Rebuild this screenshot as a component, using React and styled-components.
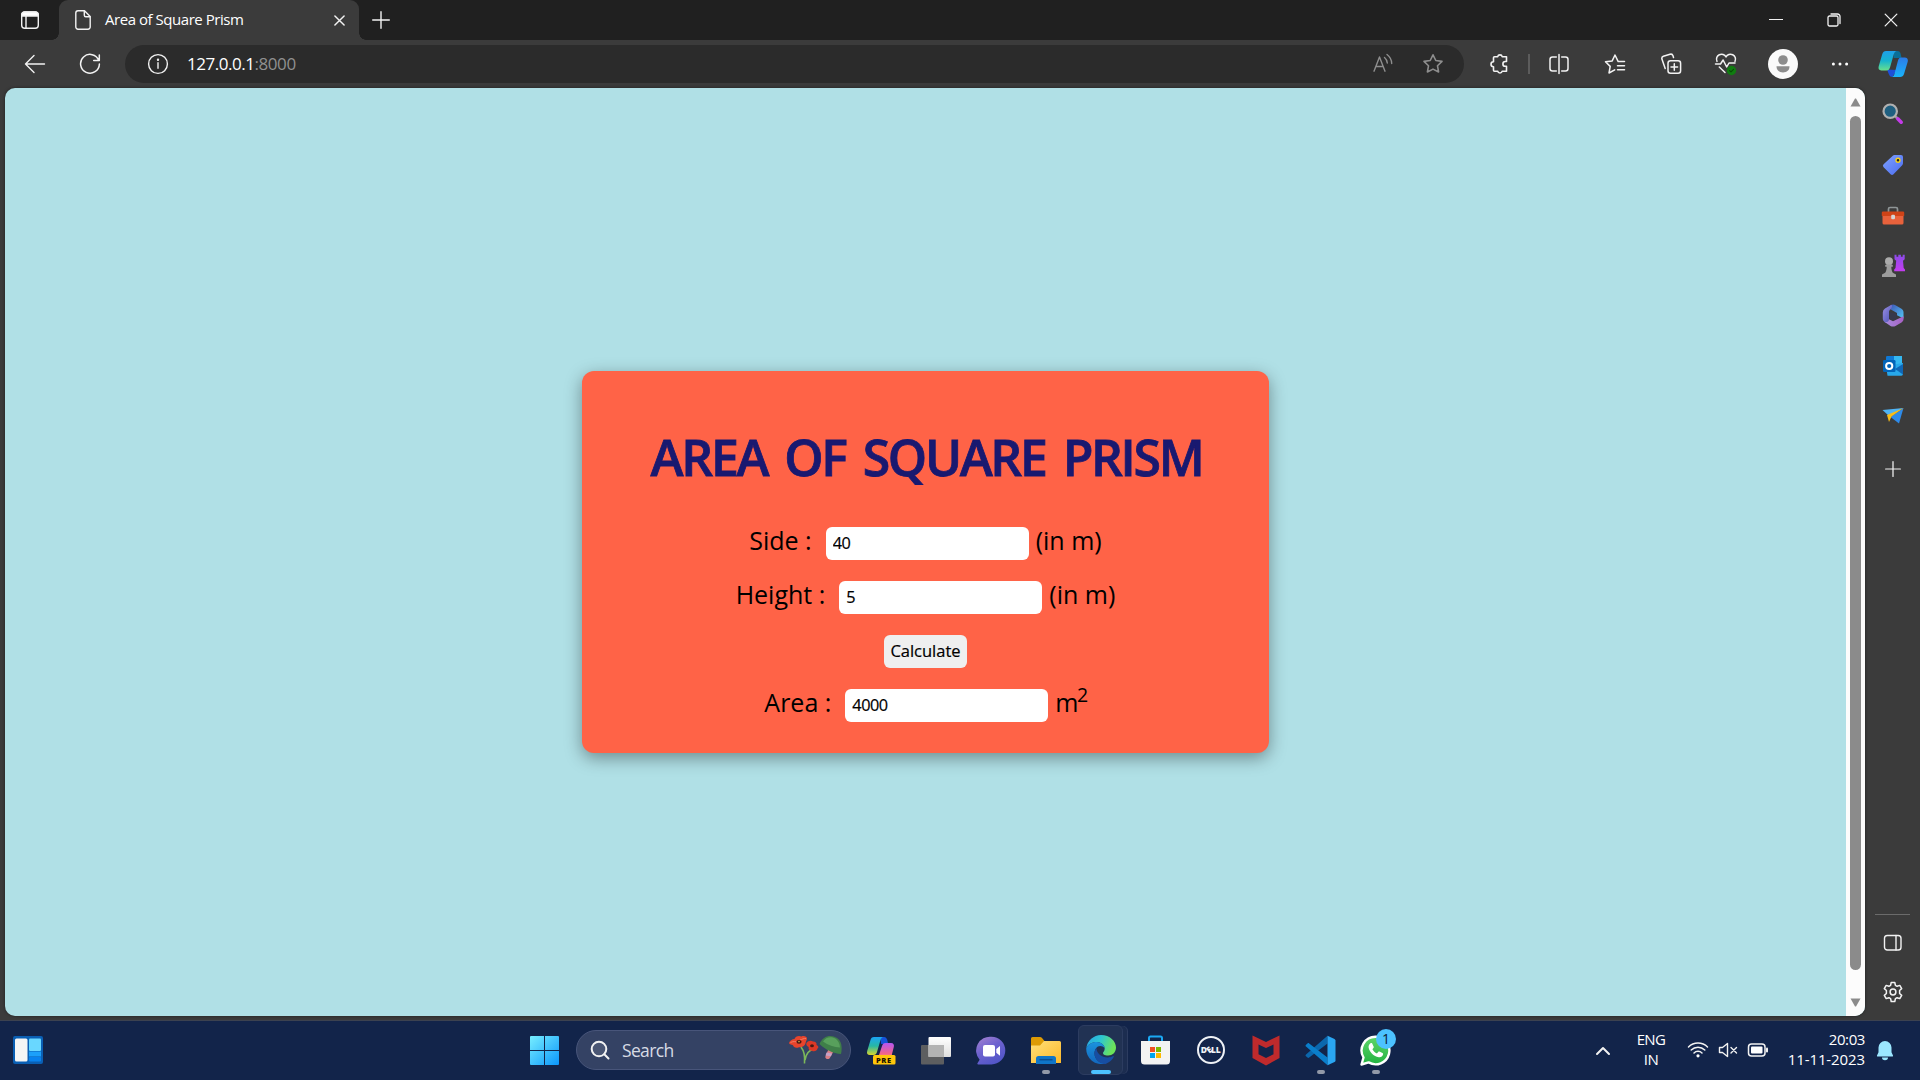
import React from "react";
import styled, { createGlobalStyle, css } from "styled-components";

const ui = `"Open Sans", "Noto Sans", sans-serif`;

const GlobalStyle = createGlobalStyle`
  *, *::before, *::after { box-sizing: border-box; }
  body { margin: 0; overflow: hidden; background: #3b3b3b; }
  svg { display: block; flex: none; }
`;

const Desktop = styled.div`
  display: flex;
  flex-direction: column;
  width: 1920px;
  height: 1080px;
  font-family: ${ui};
  color: #fff;
  background: #3b3b3b;
`;

/* ---------- title bar ---------- */
const TitleBar = styled.header`
  display: flex;
  height: 40px;
  background: #202020;
`;
const Slot = styled.div`
  display: flex;
  flex: none;
  align-items: center;
  justify-content: center;
  width: ${(p) => p.$w}px;
  height: ${(p) => (p.$h ? `${p.$h}px` : "100%")};
`;
const Tab = styled.div`
  position: relative;
  display: flex;
  align-items: center;
  width: 300px;
  padding: 0 12px 0 16px;
  border-radius: 9px 9px 0 0;
  background: #3b3b3b;
  &::before,
  &::after {
    content: "";
    position: absolute;
    bottom: 0;
    width: 7px;
    height: 7px;
  }
  &::before {
    left: -7px;
    background: radial-gradient(circle at 0 0, transparent 6.5px, #3b3b3b 7px);
  }
  &::after {
    right: -7px;
    background: radial-gradient(circle at 100% 0, transparent 6.5px, #3b3b3b 7px);
  }
`;
const TabTitle = styled.span`
  flex: 1;
  margin-left: 14px;
  padding-bottom: 2px;
  font-size: 15px;
  line-height: 36px;
  letter-spacing: -0.46px;
  white-space: nowrap;
`;
const Spacer = styled.div`
  flex: 1;
`;

/* ---------- toolbar ---------- */
const Toolbar = styled.nav`
  display: flex;
  align-items: center;
  height: 48px;
  padding-left: 7px;
`;
const AddressBar = styled.div`
  display: flex;
  align-items: center;
  width: 1339px;
  height: 38px;
  margin: 0 8px 0 8px;
  padding: 0 6px 0 15px;
  border-radius: 19px;
  background: #2b2b2b;
`;
const Url = styled.span`
  flex: 1;
  margin-left: 12px;
  padding-bottom: 2px;
  font-size: 17px;
  letter-spacing: -0.46px;
`;
const Port = styled.span`
  color: #909090;
`;
const ToolbarRule = styled.div`
  width: 2px;
  height: 20px;
  margin-right: 1px;
  background: #5c5c5c;
`;
const Avatar = styled.div`
  display: grid;
  place-items: center;
  width: 30px;
  height: 30px;
  border-radius: 50%;
  background: #fafafa;
`;

/* ---------- page area ---------- */
const Body = styled.div`
  display: flex;
  flex: 1;
  min-height: 0;
`;
const Viewport = styled.main`
  display: flex;
  width: 1860px;
  height: 928px;
  margin-left: 5px;
  overflow: hidden;
  border-radius: 10px;
  background: #b0e0e6;
  box-shadow: 0 0 3px rgba(0, 0, 0, 0.5);
`;
const Page = styled.div`
  display: flex;
  flex: 1;
  align-items: center;
  justify-content: center;
  padding-top: 20px;
`;
const Card = styled.section`
  width: 687px;
  height: 382px;
  padding-top: 52px;
  border-radius: 12px;
  background: #ff6347;
  color: #000;
  box-shadow: 0 5px 17px rgba(0, 0, 0, 0.38);
`;
const Heading = styled.h1`
  margin: 0 0 36px;
  padding-left: 2px;
  color: #191970;
  font-size: 50px;
  font-weight: 600;
  line-height: 68px;
  letter-spacing: -2.35px;
  word-spacing: 6.5px;
  text-align: center;
  white-space: nowrap;
  -webkit-text-stroke: 0.8px #191970;
`;
const Form = styled.div`
  display: flex;
  flex-direction: column;
  gap: 21px;
`;
const Row = styled.div`
  display: flex;
  justify-content: center;
  height: 33px;
  font-size: 25px;
  line-height: 27px;
  white-space: nowrap;
`;
const Label = styled.label`
  margin-right: 14px;
`;
const Unit = styled.span`
  margin-left: 7px;
  letter-spacing: ${(p) => (p.$tight ? -1.5 : 0)}px;
`;
const Sup = styled.sup`
  font-size: 19.5px;
  line-height: 0;
  vertical-align: 10px;
`;
const control = css`
  height: 33px;
  border: 0;
  border-radius: 6px;
  font-family: ${ui};
  color: #000;
  -webkit-text-stroke: 0.2px #000;
`;
const Field = styled.input`
  ${control}
  width: 203px;
  padding: 0 7px 1px;
  background: #fff;
  font-size: 16.3px;
  letter-spacing: -0.5px;
`;
const Button = styled.button`
  ${control}
  width: 83px;
  padding: 0 0 2px;
  background: #efefef;
  font-size: 16.5px;
`;

const Scrollbar = styled.div`
  display: flex;
  flex-direction: column;
  align-items: center;
  width: 19px;
  padding: 10px 0 9px;
  background: #fcfcfc;
`;
const Thumb = styled.div`
  width: 11px;
  height: 854px;
  margin: 9px 0 28px;
  border-radius: 6px;
  background: #8b8b8b;
`;

/* ---------- sidebar ---------- */
const Sidebar = styled.aside`
  display: flex;
  flex-direction: column;
  width: 55px;
  padding: 1px 0 4px;
`;
const SidebarRule = styled.div`
  width: 35px;
  height: 1px;
  margin: 0 0 3px 10px;
  background: #6b6b6b;
`;

/* ---------- taskbar ---------- */
const Taskbar = styled.footer`
  display: flex;
  height: 59px;
  padding-right: 15px;
  background: #12244a;
  box-shadow: 0 -1px 0 #3c4250;
`;
const TaskItem = styled.div`
  position: relative;
  display: flex;
  flex: none;
  align-items: center;
  justify-content: center;
  width: 55px;
  height: 58px;
  &::after {
    content: "";
    position: absolute;
    bottom: 5px;
    left: 50%;
    width: ${(p) => (p.$state === "active" ? 20 : 8)}px;
    height: 4px;
    border-radius: 2px;
    transform: translateX(-50%);
    background: ${(p) => (p.$state === "active" ? "#4cc2ff" : "#9299a8")};
    display: ${(p) => (p.$state ? "block" : "none")};
  }
`;
const ActiveTile = styled.div`
  display: grid;
  place-items: center;
  width: 45px;
  height: 50px;
  border: 1px solid #2c3c60;
  border-radius: 6px;
  background: #213253;
  box-shadow: 5px 0 0 -1px #1c2d50, 6px 0 0 -1px #2c3c60;
`;
const SearchBox = styled.div`
  display: flex;
  align-items: center;
  width: 275px;
  height: 40px;
  margin: 9px 2px 0 4px;
  padding: 0 6px 0 13px;
  border: 1px solid #48557a;
  border-radius: 20px;
  background: #344264;
`;
const SearchText = styled.span`
  flex: 1;
  margin-left: 12px;
  color: #d7dbe4;
  font-size: 17.5px;
  letter-spacing: -0.65px;
`;
const StartSlot = styled(TaskItem)`
  margin-left: 461px;
`;
const Badge = styled.span`
  position: absolute;
  top: 8px;
  right: 7px;
  width: 20px;
  height: 20px;
  border-radius: 50%;
  background: #4cc2ff;
  color: #0b1a33;
  font-size: 14px;
  line-height: 19px;
  text-align: center;
`;
const TrayText = styled.div`
  width: ${(p) => p.$w}px;
  padding-top: 8px;
  font-size: 15px;
  line-height: 20px;
  letter-spacing: ${(p) => p.$spacing}px;
  text-align: ${(p) => p.$align};
`;
const TrayLine = styled.div`
  letter-spacing: ${(p) => p.$spacing}px;
`;

/* ---------- line icons ---------- */
const Line = ({ w = 20, h = w, box, sw = 1.4, color = "#f2f2f2", children }) => (
  <svg width={w} height={h} viewBox={box || `0 0 ${w} ${h}`} fill="none" stroke={color} strokeWidth={sw} strokeLinecap="round" strokeLinejoin="round">
    {children}
  </svg>
);

const WorkspaceIcon = () => (
  <Line w={20}>
    <rect x="1.700" y="2" width="16.600" height="16.300" rx="3" />
    <path d="M1.700 6V5a3 3 0 0 1 3-3h10.600a3 3 0 0 1 3 3v1z" fill="#fff" />
    <path d="M6 6v12" />
  </Line>
);
const PageIcon = () => (
  <Line w={16} h={20}>
    <path d="M3 .8h6.500l5.700 5.700V17a2.200 2.200 0 0 1-2.200 2.200H3A2.200 2.200 0 0 1 .8 17V3A2.200 2.200 0 0 1 3 .8z" />
    <path d="M9.300 1v4.200a1.500 1.500 0 0 0 1.500 1.500H15" />
  </Line>
);
const CrossIcon = ({ size = 12, sw = 1.4 }) => (
  <Line w={size} box="0 0 12 12" sw={sw}>
    <path d="M1 1l10 10M11 1L1 11" />
  </Line>
);
const PlusIcon = ({ size = 18 }) => (
  <Line w={size} box="0 0 18 18">
    <path d="M9 .7v16.600M.7 9h16.600" />
  </Line>
);
const BackIcon = () => (
  <Line w={22} h={20} sw={1.4}>
    <path d="M20.500 10H1.500M10 1.600L1.500 10l8.500 8.400" />
  </Line>
);
const ReloadIcon = () => (
  <Line w={22} sw={1.5}>
    <path d="M19.800 7.500A9.400 9.400 0 1 0 20.400 11M20.300 2v5.600h-5.600" />
  </Line>
);
const InfoIcon = () => (
  <Line w={22} sw={1.4}>
    <circle cx="11" cy="11" r="9.400" />
    <path d="M11 9.800v5.500" />
    <circle cx="11" cy="6.800" r=".5" fill="#f2f2f2" />
  </Line>
);
const ReadAloudIcon = () => (
  <Line w={22} color="#8e8e8e" sw={1.4}>
    <path d="M2 18.200L7.500 4l5.500 14.200M4 13.500h7M12.500 4.500a8 8 0 0 1 2.800 5.500M15 1.500a11.500 11.500 0 0 1 4.700 9" />
  </Line>
);
const starPath = "M11 1.800l2.800 5.700 6.200.9-4.500 4.400 1.100 6.200-5.600-2.900-5.600 2.900 1.100-6.200L2 8.400l6.200-.9z";
const StarIcon = () => (
  <Line w={22} color="#8e8e8e" sw={1.6}>
    <path d={starPath} />
  </Line>
);
const PuzzleIcon = () => (
  <Line w={22} sw={1.6}>
    <path d="M5.500 3.700h3.200a2.300 2.300 0 0 1 4.500 0h4.300v4.800h-1.200a2.400 2.400 0 0 0 0 4.800h1.200v4.900h-4.300a2.300 2.300 0 0 1-4.500 0H5.500a1 1 0 0 1-1-1v-3.500a2.500 2.500 0 0 1 0-5V4.700a1 1 0 0 1 1-1z" />
  </Line>
);
const SplitIcon = () => (
  <Line w={22} sw={1.5}>
    <path d="M11 1.500v19M8.300 4H4.500a2.500 2.500 0 0 0-2.500 2.500v9A2.500 2.500 0 0 0 4.500 18h3.800M13.700 4h3.800A2.500 2.500 0 0 1 20 6.500v9a2.500 2.500 0 0 1-2.500 2.500h-3.800" />
  </Line>
);
const FavoritesIcon = () => (
  <Line w={22} sw={1.5}>
    <path d="M20.500 8.600h-6.300L11 2 8.200 7.900l-6.700.8 4.700 4.700L5 20l5.700-3.200M13.500 12.700h7M13.500 16.800h7" />
  </Line>
);
const CollectionsIcon = () => (
  <Line w={22} sw={1.5}>
    <rect x="8" y="7.700" width="12.600" height="12.600" rx="2.500" />
    <path d="M14.300 10.700v6.600M11 14h6.600M5.200 15.500L2 6.300a2.400 2.400 0 0 1 1.400-3L10 1.300a2.400 2.400 0 0 1 3 1.500l.5 1.700" />
  </Line>
);
const HealthIcon = () => (
  <Line w={24} h={24} sw={1.5}>
    <path d="M3 9.400A5 5 0 0 1 12 5a5 5 0 0 1 9 4.400M1.500 12h5l2.600-4 3.600 7 2.300-4h6M5.300 15l5.700 5.500" />
    <circle cx="17.500" cy="18.500" r="4.700" fill="#107c10" stroke="none" />
    <path d="M15.600 18.600l1.400 1.300 2.500-2.600" stroke="#064d06" strokeWidth="1.100" />
  </Line>
);
const PersonIcon = () => (
  <svg width="20" height="22" viewBox="0 0 20 22" fill="#8c8c8c">
    <circle cx="10" cy="7" r="4.800" />
    <path d="M3.500 13.300h13c0 4-2.600 6.200-6.500 6.200s-6.500-2.200-6.500-6.200z" />
  </svg>
);
const DotsIcon = () => (
  <svg width="18" height="4" viewBox="0 0 18 4" fill="#fff">
    <circle cx="2.400" cy="2" r="1.500" />
    <circle cx="9" cy="2" r="1.500" />
    <circle cx="15.600" cy="2" r="1.500" />
  </svg>
);
const CopilotIcon = () => (
  <svg width="30" height="28" viewBox="0 0 30 28">
    <defs>
      <linearGradient id="cpA" x1="0" y1="0" x2="0" y2="1"><stop stopColor="#1f9fea" /><stop offset=".5" stopColor="#16b3cf" /><stop offset="1" stopColor="#68e08c" /></linearGradient>
      <linearGradient id="cpB" x1="0" y1="0" x2="0" y2="1"><stop stopColor="#2c7be8" /><stop offset="1" stopColor="#19b4fb" /></linearGradient>
    </defs>
    <path d="M16 1h3.500c2 0 2.700 1.300 3.200 3l.8 4h-8z" fill="#0a6f98" />
    <path d="M9 19.500l2 5c.7 1.700 1.700 2.500 3.500 2.500l4-7z" fill="#1d4fd8" />
    <path d="M8 1h10.500c-1.600.5-2.200 1.600-2.800 3.500L12 17.500c-.7 2-1.500 3-3.500 3H3.300C1 20.500 0 18.600.7 16.300L4.300 4C5 2 6 1 8 1z" fill="url(#cpA)" />
    <path d="M22 27H14c1.500-.5 2-1.600 2.500-3.300L20 10.500c.6-2 1.500-3 3.500-3h3.200c2.500 0 3.600 1.800 3 4.200L26 24c-.6 2-1.900 3-4 3z" fill="url(#cpB)" />
  </svg>
);

/* ---------- sidebar icons ---------- */
const MagnifierIcon = () => (
  <svg width="22" height="22" viewBox="0 0 22 22">
    <path d="M12.500 12.500l3 3" stroke="#9a9a9a" strokeWidth="2.500" />
    <path d="M15.800 15.800l3.400 3.400" stroke="#c43be8" strokeWidth="3.600" strokeLinecap="round" />
    <circle cx="8.200" cy="8.200" r="6.700" fill="#1f5f80" stroke="#b0b0b0" strokeWidth="2.200" />
  </svg>
);
const TagIcon = () => (
  <svg width="22" height="22" viewBox="0 0 22 22">
    <defs><linearGradient id="tag" x1="0" y1="0" x2="1" y2="1"><stop stopColor="#7fa2ff" /><stop offset="1" stopColor="#4b6cf0" /></linearGradient></defs>
    <path d="M12.500 1H19a2 2 0 0 1 2 2v6.200c0 .8-.3 1.400-.8 2l-8.700 9a2 2 0 0 1-2.900 0l-7-7a2 2 0 0 1 0-2.900L10.800 1.800C11.300 1.300 11.800 1 12.500 1z" fill="url(#tag)" />
    <circle cx="16" cy="6.200" r="2" fill="#222" stroke="#f5cf1d" strokeWidth="1.400" />
  </svg>
);
const ToolboxIcon = () => (
  <svg width="24" height="20" viewBox="0 0 24 20">
    <path d="M7.500 6V3a1.500 1.500 0 0 1 1.500-1.500h6A1.500 1.500 0 0 1 16.500 3v3" fill="none" stroke="#8f9596" strokeWidth="1.700" />
    <rect x="1.500" y="9" width="21" height="9.500" rx="1.500" fill="#e8623c" />
    <path d="M2 5.500h20a1.200 1.200 0 0 1 1.200 1.200V10H.8V6.700A1.200 1.200 0 0 1 2 5.500z" fill="#cf4317" />
    <rect x="10.200" y="8.800" width="3.800" height="4.400" rx="1.300" fill="#d5d5d5" />
  </svg>
);
const ChessIcon = () => (
  <svg width="24" height="24" viewBox="0 0 24 24">
    <defs><linearGradient id="rook" x1="0" y1="0" x2="0" y2="1"><stop stopColor="#8a4be8" /><stop offset="1" stopColor="#c53df0" /></linearGradient></defs>
    <path d="M13.500.800h2v2h1.800v-2h2.600v2h1.800v-2h2v4.500l-1.700 1.400.7 7.300 1.300 1.500v1.800H13.200v-1.800l1.300-1.500.7-7.300-1.700-1.400z" fill="url(#rook)" />
    <circle cx="8" cy="7.300" r="4" fill="#ababab" />
    <path d="M5.600 10.500h4.800l1.400.6v1.700h-1.500c0 2.400.5 4.400 1.500 6l3.200 1.700V23H1v-2.500l3.200-1.700c1-1.600 1.500-3.600 1.500-6H4.200v-1.700z" fill="#9c9c9c" />
  </svg>
);
const M365Icon = () => (
  <svg width="22" height="23" viewBox="0 0 22 23">
    <defs>
      <linearGradient id="mA" x1="0" y1="0" x2="1" y2="1"><stop stopColor="#3d54b5" /><stop offset="1" stopColor="#53c8f5" /></linearGradient>
      <linearGradient id="mB" x1="0" y1="0" x2="1" y2="1"><stop stopColor="#9c90e2" /><stop offset="1" stopColor="#4a51b6" /></linearGradient>
      <linearGradient id="mC" x1="0" y1="0" x2="1" y2="0"><stop stopColor="#a68de0" /><stop offset="1" stopColor="#a861c4" /></linearGradient>
    </defs>
    <path d="M8.500 1.200c1.700-.9 3.500-.9 5 0l6 3.500c1.200.7 2 2 2 3.500v6.300L15 11.300V9L8 5z" fill="url(#mA)" />
    <path d="M9.500.8L3 4.500A4.500 4.500 0 0 0 .8 8.400v6.200c0 1.600.9 3 2.200 3.800 2 .5 4-.6 4-2.700V8.300c0-3 3.200-3.200 3-6.300z" fill="url(#mB)" />
    <path d="M2 17.500c2.600 1.500 5-.2 5-2.300l4 2 10.500-5v3c0 1.300-.8 2.500-2 3.200l-6 3.500c-1.500.9-3.500.9-5 0z" fill="url(#mC)" />
    <path d="M7.200 8l7.500 1.500v4.800L11 16.800l-3.800-2.300z" fill="#37394a" />
  </svg>
);
const OutlookIcon = () => (
  <svg width="22" height="22" viewBox="0 0 22 22">
    <rect x="4" y="1" width="16" height="15" rx="1.200" fill="#0f78d4" />
    <rect x="12" y="1" width="8" height="9" fill="#35b8f1" />
    <path d="M4 11l17-3v11a1.700 1.700 0 0 1-1.700 1.700H5.500z" fill="#28a8ea" />
    <path d="M13 14l8-5v10.500z" fill="#1066b5" />
    <rect x="1" y="5" width="12.500" height="12" rx="1.200" fill="#0364b8" />
    <circle cx="7.200" cy="11" r="3.100" fill="none" stroke="#fff" strokeWidth="2" />
  </svg>
);
const PlaneIcon = () => (
  <svg width="22" height="18" viewBox="0 0 22 18">
    <path d="M.5 3L21.500 1 7 9z" fill="#4fb4f5" />
    <path d="M21.500 1L17 16.500 8.500 10z" fill="#2e8bea" />
    <path d="M21.500 1L5 8l2 7 2.500-5.500z" fill="#f8bd18" />
  </svg>
);
const PanelIcon = () => (
  <Line w={20}>
    <rect x="1.500" y="2.500" width="16.500" height="14.500" rx="2.800" />
    <path d="M13 2.500V17" />
  </Line>
);
const GearIcon = () => (
  <Line w={22} sw={1.5}>
    <circle cx="11" cy="11" r="2.900" />
    <path d="M9.200 1.500h3.600l.6 2.800 1.700 1 2.700-.9 1.900 3.200-2.100 1.900v3l2.100 1.900-1.900 3.200-2.700-.9-1.700 1-.6 2.800H9.200l-.6-2.800-1.700-1-2.700.9-1.900-3.200 2.100-1.900v-3L2.300 7.600l1.900-3.200 2.700.9 1.700-1z" />
  </Line>
);

/* ---------- taskbar icons ---------- */
const WidgetsIcon = () => (
  <svg width="30" height="28" viewBox="0 0 30 28">
    <rect width="30" height="28" rx="2" fill="#0a5fb4" />
    <rect x="2" y="2.500" width="12.500" height="23" rx="1.500" fill="#f5f5f5" />
    <rect x="16" y="2.500" width="12" height="12.500" rx="1" fill="#69d7ff" />
    <rect x="16" y="15.500" width="12" height="5" fill="#1ba0fa" />
    <rect x="16" y="21" width="12" height="4.500" rx="1" fill="#0882ee" />
  </svg>
);
const StartIcon = () => (
  <svg width="29" height="29" viewBox="0 0 29 29">
    <defs><linearGradient id="win" x1="0" y1="0" x2="1" y2="1"><stop stopColor="#77eeff" /><stop offset="1" stopColor="#0b96fb" /></linearGradient></defs>
    <path d="M1 0h13v14H0V1a1 1 0 0 1 1-1zM15 0h13a1 1 0 0 1 1 1v13H15zM0 15h14v14H1a1 1 0 0 1-1-1zM15 15h14v13a1 1 0 0 1-1 1H15z" fill="url(#win)" />
  </svg>
);
const SearchIcon = () => (
  <Line w={20} sw={2}>
    <circle cx="9" cy="9" r="7.300" fill="#4a5674" />
    <path d="M14.300 14.300L18.500 18.500" />
  </Line>
);
const PoppyIcon = () => (
  <svg width="56" height="32" viewBox="0 0 56 32">
    <path d="M13 13c4 5 4 11 3.500 16.500M26 15c-5 1-8 5-9 11" stroke="#7cb85a" strokeWidth="1.600" fill="none" />
    <path d="M1 9c1-2.500 3-3.800 5.500-4 .8-2.500 4-4 7-2.500 2.500-1 5.500 0 5.500 2.200-.3 1.800-1.300 3-1.500 4.500-.7 3-4 4.500-6.500 4-3 1.200-5.500.3-6-2C3.500 10.500 1.500 10.500 1 9z" fill="#e8442c" />
    <path d="M18.500 9c1.500-2.500 4.500-3 6.500-1.500 2.500 0 4 1.500 3.500 3.500 2 1 2.500 2.500 1 3.500-.5 2.500-3.500 3.500-5.500 2.200-2.500.3-4-1.700-3.300-3.700C18.800 12 17.800 10.500 18.500 9z" fill="#dd3826" />
    <path d="M2.500 8.500c3-1.500 5.500-1 7.500 0M12 6c2-.5 4-2 6-1.500" stroke="#f4806a" strokeWidth=".9" fill="none" />
    <ellipse cx="11" cy="7.800" rx="2.600" ry="1.900" fill="#4a1710" />
    <circle cx="11" cy="7.600" r=".8" fill="#d9b14a" />
    <ellipse cx="24" cy="11.800" rx="1.900" ry="1.500" fill="#4a1710" />
    <path d="M40.500 15l5.500 1.500-4.500 8c-2 1.300-4 .3-4.300-1.500z" fill="#d97f88" />
    <path d="M38.500 18.500l5.500 1-1 2.700-5.500-.7z" fill="#c5a1c8" />
    <path d="M31.500 10C35 1.500 43 .200 49 4c4.500 3 5.500 9 4 16-8-.5-15-4-21.500-10z" fill="#3f7f49" />
    <path d="M35 7.500C38 2.500 44 2 48 5c2.500 2 3.800 5 4 8.500C46 13.500 40 11 35 7.500z" fill="#58a05c" />
  </svg>
);
const PreText = styled.text`
  font-family: ${ui};
  font-size: 7.5px;
  font-weight: 800;
  letter-spacing: 0.6px;
`;
const CopilotPreIcon = () => (
  <svg width="30" height="29" viewBox="0 0 30 29">
    <defs>
      <linearGradient id="cqA" x1="0" y1="0" x2="0" y2="1"><stop stopColor="#1ba5f5" /><stop offset=".5" stopColor="#27b7a4" /><stop offset="1" stopColor="#d8d62c" /></linearGradient>
      <linearGradient id="cqB" x1="0" y1="0" x2="0" y2="1"><stop stopColor="#b455f2" /><stop offset=".7" stopColor="#f2648a" /><stop offset="1" stopColor="#ff9a63" /></linearGradient>
    </defs>
    <path d="M14 1h4c2 0 2.800 1.500 3.300 3l.9 4h-7z" fill="#1552d8" />
    <path d="M8 1h9c-1.500.6-2 1.500-2.500 3L11 16c-.6 2-1.500 3-3.500 3H4C1.500 19 .5 17.500 1.200 15L4.500 4C5 2 6 1 8 1z" fill="url(#cqA)" />
    <path d="M23 22H12l4-12c.7-2 1.500-3 3.500-3H25c2.500 0 3.400 1.700 2.800 4L25.500 20z" fill="url(#cqB)" />
    <rect x="7" y="19" width="22.500" height="9.500" rx="1.500" fill="#ffc60a" />
    <PreText x="10" y="26.500" fill="#1d1600">PRE</PreText>
  </svg>
);
const TaskViewIcon = () => (
  <svg width="30" height="29" viewBox="0 0 30 29">
    <defs><linearGradient id="tv" x1="0" y1="0" x2="0" y2="1"><stop stopColor="#ffffff" /><stop offset="1" stopColor="#dedede" /></linearGradient></defs>
    <rect x="0" y="9" width="23" height="19.500" rx="1" fill="#5d5e60" />
    <rect x="7.500" y="1" width="22.500" height="20" rx="1" fill="url(#tv)" />
    <rect x="7.500" y="9" width="15.500" height="12" fill="#b3b3b3" />
  </svg>
);
const ChatIcon = () => (
  <svg width="30" height="29" viewBox="0 0 30 29">
    <defs><linearGradient id="chat" x1="0" y1="0" x2=".6" y2="1"><stop stopColor="#a883d0" /><stop offset=".5" stopColor="#6d62cf" /><stop offset="1" stopColor="#5256c8" /></linearGradient></defs>
    <path d="M15.500.8a13.800 13.800 0 0 1 0 27.600H2.200c-.8 0-1.100-.8-.6-1.400l2-3.300A13.800 13.800 0 0 1 15.500.8z" fill="url(#chat)" />
    <rect x="7" y="9" width="12" height="11.500" rx="2" fill="#fff" />
    <path d="M20.300 13l3.700-3v9.700l-3.700-3z" fill="#fff" />
  </svg>
);
const FolderIcon = () => (
  <svg width="30" height="28" viewBox="0 0 30 28">
    <defs><linearGradient id="fold" x1="0" y1="0" x2="1" y2="1"><stop stopColor="#ffe07a" /><stop offset="1" stopColor="#fcb92a" /></linearGradient></defs>
    <path d="M0 2.500A1.500 1.500 0 0 1 1.500 1H9c.8 0 1.300.2 1.800.7L13.500 5v6H0z" fill="#dd9b05" />
    <path d="M0 9.500h9l4-4.500h15.500A1.500 1.500 0 0 1 30 6.500V27H0z" fill="url(#fold)" />
    <path d="M5 28v-5.500a2.500 2.500 0 0 1 2.500-2.500h15a2.500 2.500 0 0 1 2.500 2.500V28z" fill="#0f75c8" />
    <path d="M8.500 23.700h13" stroke="#0b4f93" strokeWidth="1.500" />
  </svg>
);
const EdgeIcon = () => (
  <svg width="30" height="30" viewBox="0 0 30 30">
    <defs>
      <linearGradient id="eA" x1="0" y1="0" x2="1" y2=".3"><stop stopColor="#28a3e5" /><stop offset=".5" stopColor="#2dc6d2" /><stop offset="1" stopColor="#6ce35a" /></linearGradient>
      <linearGradient id="eB" x1="0" y1="0" x2="0" y2="1"><stop stopColor="#1b93dd" /><stop offset="1" stopColor="#1266bd" /></linearGradient>
    </defs>
    <path d="M.3 13A15 15 0 0 1 15 0c9 0 15 6.300 15 12.500 0 5-3.700 8-7.800 8-4.200 0-5.200-1.700-5.200-2.600 0-.8 1.700-1.600 1.700-4.400 0-3.400-3.700-6.500-8-6.500C5.800 7 2 9.500.3 13z" fill="url(#eA)" />
    <path d="M.3 13C2 9.500 5.800 7 10.700 7c4.300 0 8 3.100 8 6.500-1-1.800-2.800-2.500-4.500-2.500-3.300 0-5.700 3.500-5.700 7.500 0 6 5.300 10 11 10A15 15 0 0 1 .3 13z" fill="url(#eB)" />
    <path d="M10.500 13c-1.300 1.400-2 3.300-2 5.500 0 6 5.300 10.500 11.200 10.500 3.700-1.600 6.800-4.200 8-7 .3-.8-.3-1.200-1-.8-1.500.8-3 1.200-4.900 1.200-6.500 0-11.300-4-11.300-9.400z" fill="#174ea2" />
  </svg>
);
const StoreIcon = () => (
  <svg width="29" height="30" viewBox="0 0 29 30">
    <path d="M8 7V3a1.500 1.500 0 0 1 1.500-1.500h10A1.500 1.500 0 0 1 21 3v4" fill="none" stroke="#1aa8f3" strokeWidth="2" />
    <path d="M0 6h29v20a3.500 3.500 0 0 1-3.500 3.500h-22A3.500 3.500 0 0 1 0 26z" fill="#f3f3f3" />
    <rect x="9" y="12" width="5" height="5" fill="#f25022" />
    <rect x="15" y="12" width="5" height="5" fill="#7fba00" />
    <rect x="9" y="18" width="5" height="5" fill="#00a4ef" />
    <rect x="15" y="18" width="5" height="5" fill="#ffb900" />
  </svg>
);
const DellBadge = styled.div`
  display: flex;
  align-items: center;
  justify-content: center;
  width: 28px;
  height: 28px;
  border: 2px solid #eef1f5;
  border-radius: 50%;
  color: #eef1f5;
  font-size: 8.5px;
  font-weight: 800;
  line-height: 12px;
  letter-spacing: -0.3px;
`;
const DellE = styled.span`
  transform: rotate(-38deg);
`;
const DellIcon = () => (
  <DellBadge>
    <span>D</span>
    <DellE>E</DellE>
    <span>LL</span>
  </DellBadge>
);
const McAfeeIcon = () => (
  <svg width="28" height="31" viewBox="0 0 28 31">
    <path d="M.5.500L14 7 27.500.500V23L14 30.500.500 23z" fill="#bf2a2c" />
    <path d="M6.500 9.500L14 13l7.500-3.500v9.700L14 23l-7.500-3.800z" fill="#12244a" />
  </svg>
);
const VsCodeIcon = () => (
  <svg width="31" height="31" viewBox="0 0 31 31">
    <path d="M22.500.800v7.800L4.200 22.600c-.5.400-1.200.4-1.700 0L1 21.300c-.6-.5-.6-1.400 0-1.900z" fill="#0b67ad" />
    <path d="M22.500 30.200v-7.800L4.200 8.400c-.5-.4-1.200-.4-1.700 0L1 9.700c-.6.500-.6 1.400 0 1.900z" fill="#0a7ecb" />
    <path d="M22.500.800l7 3.200c.6.300 1 .9 1 1.600v19.800c0 .7-.4 1.300-1 1.600l-7 3.200z" fill="#2aa6f2" />
  </svg>
);
const WhatsAppIcon = () => (
  <svg width="31" height="31" viewBox="0 0 31 31">
    <defs><linearGradient id="wa" x1="0" y1="0" x2="0" y2="1"><stop stopColor="#5fd56a" /><stop offset="1" stopColor="#22b340" /></linearGradient></defs>
    <path d="M15.500 1.700A13.800 13.800 0 1 1 8.600 27.400L1.500 29.500l2-7A13.800 13.800 0 0 1 15.500 1.700z" fill="url(#wa)" stroke="#fff" strokeWidth="2.400" strokeLinejoin="round" />
    <path d="M10.500 8.200c.5-.4 1.300-.4 1.700.2l1.500 3.300c.2.500 0 1-.3 1.300l-1 1.200c1 2 2.500 3.300 4.500 4.200l1.300-1.500c.3-.4.800-.5 1.300-.3l3 1.500c.6.300.7.700.6 1.200-.4 2.300-2.400 3.300-4.300 3C13.500 21.300 9.500 17.300 8.600 12.600c-.2-1.800.7-3.500 1.900-4.400z" fill="#fff" />
  </svg>
);
const ChevronIcon = () => (
  <Line w={16} h={10} sw={2}>
    <path d="M2 8l6-6 6 6" />
  </Line>
);
const WifiIcon = () => (
  <Line w={22} h={18} sw={1.5}>
    <path d="M1.500 6a13.500 13.500 0 0 1 19 0M4.200 9a9.600 9.600 0 0 1 13.600 0M7 12a5.600 5.600 0 0 1 8 0" />
    <circle cx="11" cy="14.800" r="1.600" fill="#fff" stroke="none" />
  </Line>
);
const MuteIcon = () => (
  <Line w={20} h={16} sw={1.4}>
    <path d="M1.500 5.500h3L9.500 1.500v13l-5-4h-3zM13 5.500l5.500 5.500M18.500 5.500L13 11" />
  </Line>
);
const BatteryIcon = () => (
  <Line w={22} h={16} sw={1.5}>
    <rect x="1.500" y="2" width="16.500" height="12" rx="3" />
    <rect x="4" y="4.500" width="11.500" height="7" rx="1" fill="#fff" stroke="none" />
    <path d="M20 6.500v3" strokeWidth="2" />
  </Line>
);
const BellIcon = () => (
  <svg width="18" height="21" viewBox="0 0 18 21" fill="#9be7ff">
    <path d="M9 1a6.500 6.500 0 0 1 6.500 6.500v4.800l1.500 3.200c.2.500-.1 1-.6 1H1.600c-.5 0-.8-.5-.6-1l1.500-3.200V7.500A6.500 6.500 0 0 1 9 1zM6 17.500h6a3 2.800 0 0 1-6 0z" />
  </svg>
);
const Arrow = ({ down }) => (
  <svg width="11" height="9" viewBox="0 0 11 9">
    <path d={down ? "M.5.500h10L6 8.500H5z" : "M.5 8.500h10L6 .500H5z"} fill="#8b8b8b" />
  </svg>
);
const MinimizeIcon = () => (
  <Line w={14} sw={1.2}>
    <path d="M.5 6.500h13" />
  </Line>
);
const RestoreIcon = () => (
  <Line w={14} sw={1.3}>
    <rect x="1" y="3" width="10" height="10" rx="1.500" />
    <path d="M4 1h6.500A2.500 2.500 0 0 1 13 3.500V10.500" />
  </Line>
);

const sidebarIcons = [
  { Icon: MagnifierIcon, h: 50 },
  { Icon: TagIcon, h: 52 },
  { Icon: ToolboxIcon, h: 50 },
  { Icon: ChessIcon, h: 49 },
  { Icon: M365Icon, h: 51 },
  { Icon: OutlookIcon, h: 50 },
  { Icon: PlaneIcon, h: 49 },
];
const taskIcons = [
  { Icon: CopilotPreIcon },
  { Icon: TaskViewIcon },
  { Icon: ChatIcon },
  { Icon: FolderIcon, state: "open" },
  { Icon: EdgeIcon, state: "active" },
  { Icon: StoreIcon },
  { Icon: DellIcon },
  { Icon: McAfeeIcon },
  { Icon: VsCodeIcon, state: "open" },
  { Icon: WhatsAppIcon, state: "open", badge: "1" },
];

export default function App() {
  return (
    <Desktop>
      <GlobalStyle />
      <TitleBar>
        <Slot $w={59}><WorkspaceIcon /></Slot>
        <Tab>
          <PageIcon />
          <TabTitle>Area of Square Prism</TabTitle>
          <Slot $w={16}><CrossIcon size={11} sw={1.6} /></Slot>
        </Tab>
        <Slot $w={43}><PlusIcon /></Slot>
        <Spacer />
        <Slot $w={57.5}><MinimizeIcon /></Slot>
        <Slot $w={57.5}><RestoreIcon /></Slot>
        <Slot $w={57.5}><CrossIcon size={14} sw={1.1} /></Slot>
      </TitleBar>

      <Toolbar>
        <Slot $w={55}><BackIcon /></Slot>
        <Slot $w={55}><ReloadIcon /></Slot>
        <AddressBar>
          <Slot $w={35}><InfoIcon /></Slot>
          <Url>127.0.0.1<Port>:8000</Port></Url>
          <Slot $w={50}><ReadAloudIcon /></Slot>
          <Slot $w={50}><StarIcon /></Slot>
        </AddressBar>
        <Slot $w={56}><PuzzleIcon /></Slot>
        <ToolbarRule />
        <Slot $w={56}><SplitIcon /></Slot>
        <Slot $w={56}><FavoritesIcon /></Slot>
        <Slot $w={55}><CollectionsIcon /></Slot>
        <Slot $w={56}><HealthIcon /></Slot>
        <Slot $w={58}><Avatar><PersonIcon /></Avatar></Slot>
        <Slot $w={56}><DotsIcon /></Slot>
        <Slot $w={49}><CopilotIcon /></Slot>
      </Toolbar>

      <Body>
        <Viewport>
          <Page>
            <Card>
              <Heading>AREA OF SQUARE PRISM</Heading>
              <Form>
                <Row>
                  <Label>Side :</Label>
                  <Field defaultValue="40" />
                  <Unit>(in m)</Unit>
                </Row>
                <Row>
                  <Label>Height :</Label>
                  <Field defaultValue="5" />
                  <Unit>(in m)</Unit>
                </Row>
                <Row><Button>Calculate</Button></Row>
                <Row>
                  <Label>Area :</Label>
                  <Field defaultValue="4000" />
                  <Unit $tight>m<Sup>2</Sup></Unit>
                </Row>
              </Form>
            </Card>
          </Page>
          <Scrollbar>
            <Arrow />
            <Thumb />
            <Arrow down />
          </Scrollbar>
        </Viewport>
        <Sidebar>
          {sidebarIcons.map(({ Icon, h }, i) => (
            <Slot key={i} $w={55} $h={h}><Icon /></Slot>
          ))}
          <Slot $w={55} $h={58}><PlusIcon size={16} /></Slot>
          <Spacer />
          <SidebarRule />
          <Slot $w={55} $h={49}><PanelIcon /></Slot>
          <Slot $w={55} $h={50}><GearIcon /></Slot>
        </Sidebar>
      </Body>

      <Taskbar>
        <Slot $w={56} $h={58}><WidgetsIcon /></Slot>
        <StartSlot><StartIcon /></StartSlot>
        <SearchBox>
          <SearchIcon />
          <SearchText>Search</SearchText>
          <PoppyIcon />
        </SearchBox>
        {taskIcons.map(({ Icon, state, badge }, i) => (
          <TaskItem key={i} $state={state}>
            {state === "active" ? <ActiveTile><Icon /></ActiveTile> : <Icon />}
            {badge && <Badge>{badge}</Badge>}
          </TaskItem>
        ))}
        <Spacer />
        <Slot $w={40}><ChevronIcon /></Slot>
        <TrayText $w={56} $align="center" $spacing={-0.6}>
          <div>ENG</div>
          <div>IN</div>
        </TrayText>
        <Slot $w={38} $h={58}><WifiIcon /></Slot>
        <Slot $w={22} $h={58}><MuteIcon /></Slot>
        <Slot $w={38} $h={58}><BatteryIcon /></Slot>
        <TrayText $w={88} $align="right" $spacing={0}>
          <TrayLine $spacing={-0.4}>20:03</TrayLine>
          <TrayLine $spacing={-0.1}>11-11-2023</TrayLine>
        </TrayText>
        <Slot $w={40}><BellIcon /></Slot>
      </Taskbar>
    </Desktop>
  );
}
